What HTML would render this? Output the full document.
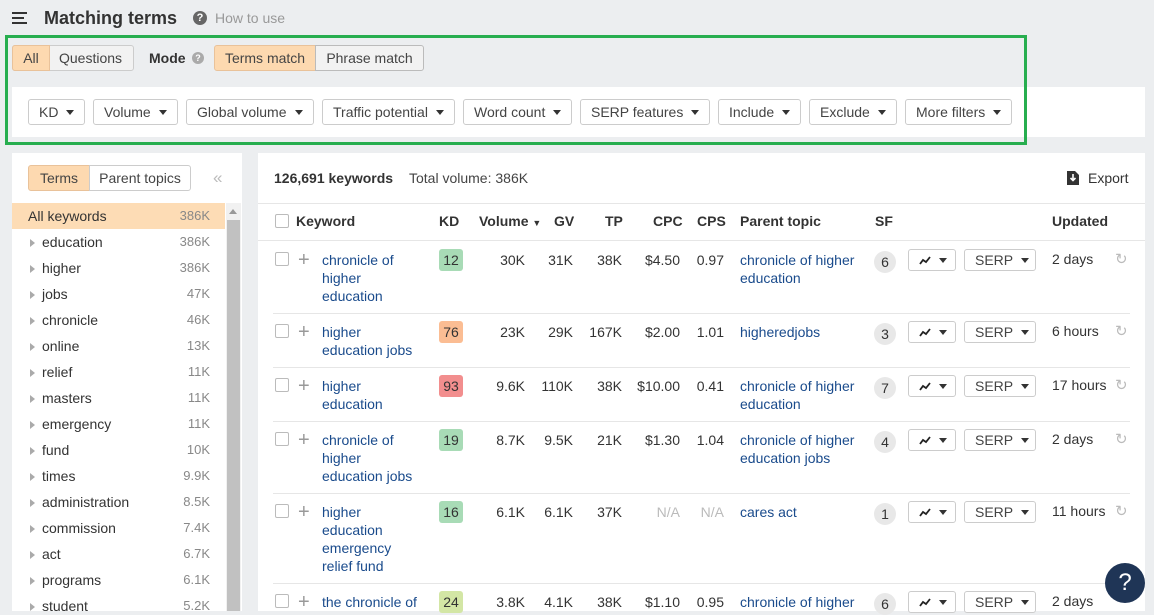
<!DOCTYPE html>
<html><head><meta charset="utf-8"><style>
*{box-sizing:border-box;margin:0;padding:0}
body{width:1154px;height:611px;overflow:hidden;background:#eceef0;font-family:"Liberation Sans",Arial,sans-serif;font-size:14px;color:#333;position:relative}
.a{position:absolute}
.btn{position:absolute;height:26px;border:1px solid #ccc;border-radius:3px;background:#fff;color:#444;font-size:14px;line-height:24px;padding:0 10px;white-space:nowrap}
.car{display:inline-block;width:0;height:0;border-left:4px solid transparent;border-right:4px solid transparent;border-top:5px solid #333;vertical-align:middle;margin-left:8px;margin-top:-2px}
.side{position:absolute;left:28px;width:182px;font-size:14px;color:#333}
.side span{position:absolute;right:0;color:#888;font-size:13px}
.tri{position:absolute;left:2px;top:5px;width:0;height:0;border-top:4px solid transparent;border-bottom:4px solid transparent;border-left:5px solid #aaa}
.kw{color:#1a4b8c;line-height:18px}
.num{position:absolute;text-align:right;line-height:18px}
.kd{position:absolute;left:439px;width:24px;height:22px;border-radius:3px;text-align:center;line-height:22px;color:#333}
.cb{position:absolute;left:275px;width:14px;height:14px;border:1px solid #bbb;border-radius:2px;background:#fff}
.plus{position:absolute;left:298px;color:#999;font-size:20px;line-height:18px}
.sf{position:absolute;left:874px;width:22px;height:22px;border-radius:11px;background:#e8e8e8;text-align:center;line-height:22px;color:#333;font-size:14px}
.hl{position:absolute;left:273px;width:857px;height:1px;background:#e6e6e6}
.rf{position:absolute;left:1115px;color:#bbb;font-size:15px}
</style></head><body>
<div class="a" style="left:12px;top:12px;width:15px;height:2px;background:#333"></div>
<div class="a" style="left:12px;top:17px;width:12px;height:2px;background:#333"></div>
<div class="a" style="left:12px;top:22px;width:15px;height:2px;background:#333"></div>
<div class="a" style="left:44px;top:8px;font-size:18px;font-weight:bold;color:#333">Matching terms</div>
<div class="a" style="left:193px;top:11px;width:14px;height:14px;border-radius:7px;background:#666;color:#fff;font-size:11px;font-weight:bold;text-align:center;line-height:14px">?</div>
<div class="a" style="left:215px;top:10px;color:#999;font-size:14px">How to use</div>

<div class="a" style="left:12px;top:87px;width:1133px;height:50px;background:#fff"></div>
<div class="a" style="left:5px;top:35px;width:1022px;height:110px;border:3px solid #27ae4f"></div>

<div class="btn" style="left:12px;top:45px;width:122px;padding:0;background:#f2f2f2"></div>
<div class="a" style="left:12px;top:45px;width:38px;height:26px;background:#fdd9b0;border:1px solid #e9c29a;border-radius:3px 0 0 3px;text-align:center;line-height:24px;color:#444">All</div>
<div class="a" style="left:59px;top:50px;color:#444">Questions</div>
<div class="a" style="left:149px;top:50px;font-weight:bold;color:#333">Mode</div>
<div class="a" style="left:192px;top:52px;width:12px;height:12px;border-radius:6px;background:#aaa;color:#fff;font-size:9px;font-weight:bold;text-align:center;line-height:12px">?</div>
<div class="a" style="left:214px;top:45px;width:102px;height:26px;background:#fdd9b0;border:1px solid #e9c29a;border-radius:3px 0 0 3px;text-align:center;line-height:24px;color:#444">Terms match</div>
<div class="a" style="left:315px;top:45px;width:109px;height:26px;background:#f2f2f2;border:1px solid #bbb;border-radius:0 3px 3px 0;text-align:center;line-height:24px;color:#444">Phrase match</div>

<div class="btn" style="left:28px;top:99px">KD<i class="car"></i></div>
<div class="btn" style="left:93px;top:99px">Volume<i class="car"></i></div>
<div class="btn" style="left:186px;top:99px">Global volume<i class="car"></i></div>
<div class="btn" style="left:322px;top:99px">Traffic potential<i class="car"></i></div>
<div class="btn" style="left:463px;top:99px">Word count<i class="car"></i></div>
<div class="btn" style="left:580px;top:99px">SERP features<i class="car"></i></div>
<div class="btn" style="left:718px;top:99px">Include<i class="car"></i></div>
<div class="btn" style="left:809px;top:99px">Exclude<i class="car"></i></div>
<div class="btn" style="left:905px;top:99px">More filters<i class="car"></i></div>

<div class="a" style="left:12px;top:153px;width:230px;height:458px;background:#fff"></div>
<div class="a" style="left:28px;top:165px;width:62px;height:26px;background:#fdd9b0;border:1px solid #e9c29a;border-radius:3px 0 0 3px;text-align:center;line-height:24px;color:#444">Terms</div>
<div class="a" style="left:89px;top:165px;width:102px;height:26px;background:#fff;border:1px solid #ccc;border-radius:0 3px 3px 0;text-align:center;line-height:24px;color:#444">Parent topics</div>
<div class="a" style="left:213px;top:168px;color:#bbb;font-size:17px">«</div>
<div class="a" style="left:12px;top:203px;width:213px;height:26px;background:#fddcb5"></div>
<div class="a" style="left:226px;top:203px;width:15px;height:408px;background:#f1f1f1"></div>
<div class="a" style="left:227px;top:220px;width:13px;height:391px;background:#c1c1c1"></div>
<div class="a" style="left:229px;top:209px;width:0;height:0;border-left:4px solid transparent;border-right:4px solid transparent;border-bottom:5px solid #999"></div>
<div class="side" style="top:208px;left:28px">All keywords<span>386K</span></div>
<div class="side" style="top:234px"><i class="tri"></i><b style="font-weight:normal;margin-left:14px">education</b><span>386K</span></div>
<div class="side" style="top:260px"><i class="tri"></i><b style="font-weight:normal;margin-left:14px">higher</b><span>386K</span></div>
<div class="side" style="top:286px"><i class="tri"></i><b style="font-weight:normal;margin-left:14px">jobs</b><span>47K</span></div>
<div class="side" style="top:312px"><i class="tri"></i><b style="font-weight:normal;margin-left:14px">chronicle</b><span>46K</span></div>
<div class="side" style="top:338px"><i class="tri"></i><b style="font-weight:normal;margin-left:14px">online</b><span>13K</span></div>
<div class="side" style="top:364px"><i class="tri"></i><b style="font-weight:normal;margin-left:14px">relief</b><span>11K</span></div>
<div class="side" style="top:390px"><i class="tri"></i><b style="font-weight:normal;margin-left:14px">masters</b><span>11K</span></div>
<div class="side" style="top:416px"><i class="tri"></i><b style="font-weight:normal;margin-left:14px">emergency</b><span>11K</span></div>
<div class="side" style="top:442px"><i class="tri"></i><b style="font-weight:normal;margin-left:14px">fund</b><span>10K</span></div>
<div class="side" style="top:468px"><i class="tri"></i><b style="font-weight:normal;margin-left:14px">times</b><span>9.9K</span></div>
<div class="side" style="top:494px"><i class="tri"></i><b style="font-weight:normal;margin-left:14px">administration</b><span>8.5K</span></div>
<div class="side" style="top:520px"><i class="tri"></i><b style="font-weight:normal;margin-left:14px">commission</b><span>7.4K</span></div>
<div class="side" style="top:546px"><i class="tri"></i><b style="font-weight:normal;margin-left:14px">act</b><span>6.7K</span></div>
<div class="side" style="top:572px"><i class="tri"></i><b style="font-weight:normal;margin-left:14px">programs</b><span>6.1K</span></div>
<div class="side" style="top:598px"><i class="tri"></i><b style="font-weight:normal;margin-left:14px">student</b><span>5.2K</span></div>

<div class="a" style="left:258px;top:153px;width:887px;height:458px;background:#fff"></div>
<div class="a" style="left:274px;top:170px;font-weight:bold;color:#333">126,691 keywords</div>
<div class="a" style="left:409px;top:170px;color:#444">Total volume: 386K</div>
<svg class="a" style="left:1067px;top:171px" width="12" height="14" viewBox="0 0 12 14"><path d="M0 0H8L12 4V14H0Z" fill="#333"/><path d="M6 3V9M3.5 7L6 9.5L8.5 7" stroke="#fff" stroke-width="1.6" fill="none"/></svg>
<div class="a" style="left:1088px;top:170px;color:#333">Export</div>
<div class="a" style="left:258px;top:203px;width:887px;height:1px;background:#e6e6e6"></div>
<div class="a" style="left:258px;top:240px;width:887px;height:1px;background:#e6e6e6"></div>
<div class="cb" style="top:214px"></div>
<div class="a" style="top:213px;left:296px;font-weight:bold;color:#333">Keyword</div>
<div class="a" style="top:213px;left:439px;font-weight:bold">KD</div>
<div class="a" style="top:213px;left:479px;font-weight:bold">Volume <span style="font-size:9px">▼</span></div>
<div class="a" style="top:213px;left:554px;font-weight:bold">GV</div>
<div class="a" style="top:213px;left:605px;font-weight:bold">TP</div>
<div class="a" style="top:213px;left:653px;font-weight:bold">CPC</div>
<div class="a" style="top:213px;left:697px;font-weight:bold">CPS</div>
<div class="a" style="top:213px;left:740px;font-weight:bold">Parent topic</div>
<div class="a" style="top:213px;left:875px;font-weight:bold">SF</div>
<div class="a" style="top:213px;left:1052px;font-weight:bold">Updated</div>

<div class="hl" style="top:313px"></div><div class="hl" style="top:367px"></div><div class="hl" style="top:421px"></div><div class="hl" style="top:493px"></div><div class="hl" style="top:583px"></div>

<div class="cb" style="top:252px"></div><div class="plus" style="top:251px">+</div>
<div class="a kw" style="left:322px;top:251px;width:100px">chronicle of<br>higher<br>education</div>
<div class="kd" style="top:249px;background:#a8dbb6">12</div>
<div class="num" style="top:251px;left:470px;width:55px">30K</div>
<div class="num" style="top:251px;left:530px;width:43px">31K</div>
<div class="num" style="top:251px;left:580px;width:42px">38K</div>
<div class="num" style="top:251px;left:630px;width:50px">$4.50</div>
<div class="num" style="top:251px;left:690px;width:34px">0.97</div>
<div class="a kw" style="left:740px;top:251px">chronicle of higher<br>education</div>
<div class="sf" style="top:251px">6</div>

<div class="cb" style="top:324px"></div><div class="plus" style="top:323px">+</div>
<div class="a kw" style="left:322px;top:323px">higher<br>education jobs</div>
<div class="kd" style="top:321px;background:#fbbd93">76</div>
<div class="num" style="top:323px;left:470px;width:55px">23K</div>
<div class="num" style="top:323px;left:530px;width:43px">29K</div>
<div class="num" style="top:323px;left:580px;width:42px">167K</div>
<div class="num" style="top:323px;left:630px;width:50px">$2.00</div>
<div class="num" style="top:323px;left:690px;width:34px">1.01</div>
<div class="a kw" style="left:740px;top:323px">higheredjobs</div>
<div class="sf" style="top:323px">3</div>

<div class="cb" style="top:378px"></div><div class="plus" style="top:377px">+</div>
<div class="a kw" style="left:322px;top:377px">higher<br>education</div>
<div class="kd" style="top:375px;background:#f28e8e">93</div>
<div class="num" style="top:377px;left:470px;width:55px">9.6K</div>
<div class="num" style="top:377px;left:530px;width:43px">110K</div>
<div class="num" style="top:377px;left:580px;width:42px">38K</div>
<div class="num" style="top:377px;left:630px;width:50px">$10.00</div>
<div class="num" style="top:377px;left:690px;width:34px">0.41</div>
<div class="a kw" style="left:740px;top:377px">chronicle of higher<br>education</div>
<div class="sf" style="top:377px">7</div>

<div class="cb" style="top:432px"></div><div class="plus" style="top:431px">+</div>
<div class="a kw" style="left:322px;top:431px">chronicle of<br>higher<br>education jobs</div>
<div class="kd" style="top:429px;background:#a8dbb6">19</div>
<div class="num" style="top:431px;left:470px;width:55px">8.7K</div>
<div class="num" style="top:431px;left:530px;width:43px">9.5K</div>
<div class="num" style="top:431px;left:580px;width:42px">21K</div>
<div class="num" style="top:431px;left:630px;width:50px">$1.30</div>
<div class="num" style="top:431px;left:690px;width:34px">1.04</div>
<div class="a kw" style="left:740px;top:431px">chronicle of higher<br>education jobs</div>
<div class="sf" style="top:431px">4</div>

<div class="cb" style="top:504px"></div><div class="plus" style="top:503px">+</div>
<div class="a kw" style="left:322px;top:503px">higher<br>education<br>emergency<br>relief fund</div>
<div class="kd" style="top:501px;background:#a8dbb6">16</div>
<div class="num" style="top:503px;left:470px;width:55px">6.1K</div>
<div class="num" style="top:503px;left:530px;width:43px">6.1K</div>
<div class="num" style="top:503px;left:580px;width:42px">37K</div>
<div class="num" style="top:503px;left:630px;width:50px;color:#bbb">N/A</div>
<div class="num" style="top:503px;left:690px;width:34px;color:#bbb">N/A</div>
<div class="a kw" style="left:740px;top:503px">cares act</div>
<div class="sf" style="top:503px">1</div>

<div class="cb" style="top:594px"></div><div class="plus" style="top:593px">+</div>
<div class="a kw" style="left:322px;top:593px">the chronicle of</div>
<div class="kd" style="top:591px;background:#d3e6a5">24</div>
<div class="num" style="top:593px;left:470px;width:55px">3.8K</div>
<div class="num" style="top:593px;left:530px;width:43px">4.1K</div>
<div class="num" style="top:593px;left:580px;width:42px">38K</div>
<div class="num" style="top:593px;left:630px;width:50px">$1.10</div>
<div class="num" style="top:593px;left:690px;width:34px">0.95</div>
<div class="a kw" style="left:740px;top:593px">chronicle of higher</div>
<div class="sf" style="top:593px">6</div>

<div class="btn" style="left:908px;top:249px;width:48px;height:22px;padding:0 0 0 10px;line-height:20px"><svg width="12" height="10" viewBox="0 0 12 10" style="vertical-align:middle"><path d="M1 8L4 4L7 6L11 1" stroke="#222" stroke-width="1.8" fill="none"/></svg><i class="car"></i></div>
<div class="btn" style="left:964px;top:249px;width:72px;height:22px;line-height:20px">SERP<i class="car"></i></div>
<div class="a" style="left:1052px;top:251px">2 days</div><div class="rf" style="top:250px">↻</div>

<div class="btn" style="left:908px;top:321px;width:48px;height:22px;padding:0 0 0 10px;line-height:20px"><svg width="12" height="10" viewBox="0 0 12 10" style="vertical-align:middle"><path d="M1 8L4 4L7 6L11 1" stroke="#222" stroke-width="1.8" fill="none"/></svg><i class="car"></i></div>
<div class="btn" style="left:964px;top:321px;width:72px;height:22px;line-height:20px">SERP<i class="car"></i></div>
<div class="a" style="left:1052px;top:323px">6 hours</div><div class="rf" style="top:322px">↻</div>

<div class="btn" style="left:908px;top:375px;width:48px;height:22px;padding:0 0 0 10px;line-height:20px"><svg width="12" height="10" viewBox="0 0 12 10" style="vertical-align:middle"><path d="M1 8L4 4L7 6L11 1" stroke="#222" stroke-width="1.8" fill="none"/></svg><i class="car"></i></div>
<div class="btn" style="left:964px;top:375px;width:72px;height:22px;line-height:20px">SERP<i class="car"></i></div>
<div class="a" style="left:1052px;top:377px">17 hours</div><div class="rf" style="top:376px">↻</div>

<div class="btn" style="left:908px;top:429px;width:48px;height:22px;padding:0 0 0 10px;line-height:20px"><svg width="12" height="10" viewBox="0 0 12 10" style="vertical-align:middle"><path d="M1 8L4 4L7 6L11 1" stroke="#222" stroke-width="1.8" fill="none"/></svg><i class="car"></i></div>
<div class="btn" style="left:964px;top:429px;width:72px;height:22px;line-height:20px">SERP<i class="car"></i></div>
<div class="a" style="left:1052px;top:431px">2 days</div><div class="rf" style="top:430px">↻</div>

<div class="btn" style="left:908px;top:501px;width:48px;height:22px;padding:0 0 0 10px;line-height:20px"><svg width="12" height="10" viewBox="0 0 12 10" style="vertical-align:middle"><path d="M1 8L4 4L7 6L11 1" stroke="#222" stroke-width="1.8" fill="none"/></svg><i class="car"></i></div>
<div class="btn" style="left:964px;top:501px;width:72px;height:22px;line-height:20px">SERP<i class="car"></i></div>
<div class="a" style="left:1052px;top:503px">11 hours</div><div class="rf" style="top:502px">↻</div>

<div class="btn" style="left:908px;top:591px;width:48px;height:22px;padding:0 0 0 10px;line-height:20px"><svg width="12" height="10" viewBox="0 0 12 10" style="vertical-align:middle"><path d="M1 8L4 4L7 6L11 1" stroke="#222" stroke-width="1.8" fill="none"/></svg><i class="car"></i></div>
<div class="btn" style="left:964px;top:591px;width:72px;height:22px;line-height:20px">SERP<i class="car"></i></div>
<div class="a" style="left:1052px;top:593px">2 days</div>

<div class="a" style="left:1105px;top:563px;width:40px;height:40px;border-radius:20px;background:#1f3556;color:#fff;font-size:24px;text-align:center;line-height:40px">?</div>
</body></html>
